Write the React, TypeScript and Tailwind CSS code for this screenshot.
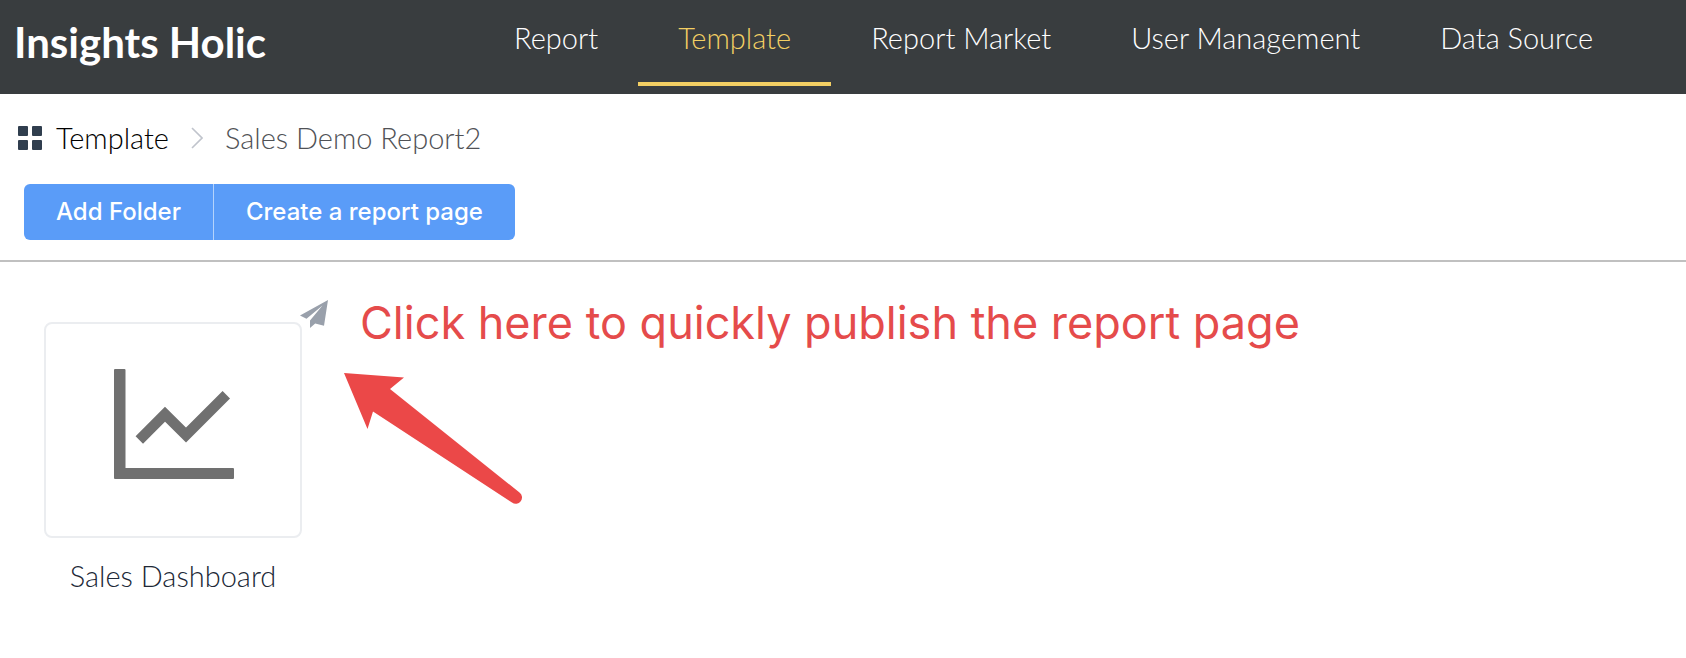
const NAV_ITEMS = [
  { label: "Report", href: "#report" },
  { label: "Template", href: "#template" },
  { label: "Report Market", href: "#market" },
  { label: "User Management", href: "#users" },
  { label: "Data Source", href: "#data-source" },
];

const ACTIVE_ITEM = "Template";

function GridIcon({ className }: { className?: string }) {
  return (
    <svg viewBox="0 0 24 24" fill="currentColor" className={className} aria-hidden="true">
      <rect x="0" y="0" width="10" height="10" rx="1" />
      <rect x="14" y="0" width="10" height="10" rx="1" />
      <rect x="0" y="14" width="10" height="10" rx="1" />
      <rect x="14" y="14" width="10" height="10" rx="1" />
    </svg>
  );
}

function ChevronIcon({ className }: { className?: string }) {
  return (
    <svg viewBox="0 0 12 22" fill="none" stroke="currentColor" strokeWidth="1.6" className={className} aria-hidden="true">
      <path d="M1 1l10 10L1 21" />
    </svg>
  );
}

function PlaneIcon({ className }: { className?: string }) {
  return (
    <svg viewBox="0 0 28 28" fill="currentColor" className={className} aria-hidden="true">
      <path d="M28 0L0 15.500l6.500 3.200L22.500 5.600 10 20.600V28l5.200-4.500 8.800 2.300z" />
    </svg>
  );
}

function ChartIcon({ className }: { className?: string }) {
  return (
    <svg viewBox="0 0 120 110" className={className} aria-hidden="true">
      <path
        d="M1 0h9.500a1 1 0 0 1 1 1v98h107.500a1 1 0 0 1 1 1v9a1 1 0 0 1-1 1H1a1 1 0 0 1-1-1V1a1 1 0 0 1 1-1z"
        fill="#707070"
      />
      <path d="M25.300 71L51 45.200l21 20.800 40.300-40.300" fill="none" stroke="#707070" strokeWidth="10.500" />
    </svg>
  );
}

function ArrowIcon({ className }: { className?: string }) {
  return (
    <svg viewBox="0 0 180 132" fill="#eb4848" className={className} aria-hidden="true">
      <path d="M0 0l60 4.500-14 11.500L175.500 119.500a6 6 0 0 1-7.500 10L29 38.500 23.500 56z" />
    </svg>
  );
}

export default function App() {
  return (
    <div className="min-h-screen bg-white font-['Lato',sans-serif]">
      <header className="flex h-[94px] items-start bg-[#393d3f] text-white">
        <h1 className="w-[474px] shrink-0 pt-4 pl-[14px] text-[42px] leading-[52px] font-bold">
          Insights Holic
        </h1>
        <nav className="flex">
          {NAV_ITEMS.map((item) => {
            const isActive = item.label === ACTIVE_ITEM;

            return (
              <a
                key={item.label}
                href={item.href}
                aria-current={isActive ? "page" : undefined}
                className={`h-[86px] border-b-4 px-10 pt-4 text-[29px] leading-[44px] font-light whitespace-nowrap ${
                  isActive ? "border-[#f3cf63] text-[#f3cf63]" : "border-transparent"
                }`}
              >
                {item.label}
              </a>
            );
          })}
        </nav>
      </header>

      <div className="border-b-2 border-[#c0c0c0] pt-[22px] pb-5">
        <div className="flex items-center pl-[18px] text-[29px] leading-[44px] font-light">
          <a href="#template" className="flex items-center gap-[14px] text-black">
            <GridIcon className="h-6 w-6 text-[#303e4e]" />
            Template
          </a>
          <ChevronIcon className="mx-[22px] h-[22px] w-3 text-[#c0c4cc]" />
          <span className="text-[#505256]">Sales Demo Report2</span>
        </div>

        <div className="mt-6 ml-6 inline-flex h-14 overflow-hidden rounded-md bg-[#5a9cf8] font-['Inter',sans-serif] text-2xl font-medium text-white">
          <button type="button" className="border-r border-[#b5d3fc] px-8">
            Add Folder
          </button>
          <button type="button" className="px-8">
            Create a report page
          </button>
        </div>
      </div>

      <main className="flex items-start pt-[38px] pl-11">
        <figure className="w-[258px] shrink-0 pt-[22px]">
          <div className="relative flex h-[216px] items-center justify-center rounded-lg border-2 border-[#ebedf0] pb-3 pl-0.5">
            <ChartIcon className="h-[110px] w-[120px]" />
            <button
              type="button"
              aria-label="Publish"
              className="absolute -top-6 -right-7 text-[#99a0ab]"
            >
              <PlaneIcon className="h-7 w-7" />
            </button>
          </div>
          <figcaption className="mt-4 text-center text-[29px] leading-[44px] font-light text-[#202836]">
            Sales Dashboard
          </figcaption>
        </figure>

        <div className="pl-[42px] text-[#e54b4b]">
          <p className="pl-4 font-['Inter',sans-serif] text-[45px] leading-[46px] whitespace-nowrap">
            Click here to quickly publish the report page
          </p>
          <ArrowIcon className="mt-[27px] h-[132px] w-[180px]" />
        </div>
      </main>
    </div>
  );
}
